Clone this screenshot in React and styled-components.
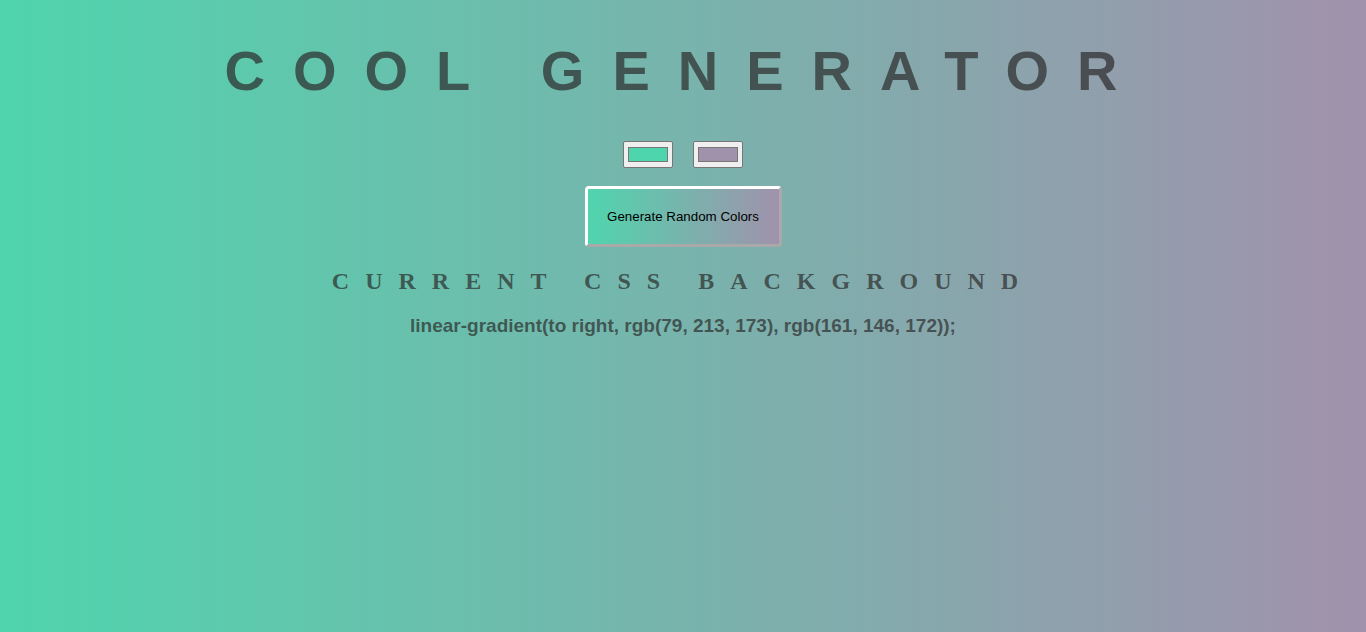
import React, { useState } from 'react';
import styled, { createGlobalStyle } from 'styled-components';

const GlobalStyle = createGlobalStyle`
    html, body {
        margin: 0;
        padding: 0;
        height: 100%;
    }
    body {
        font-family: "Liberation Sans", Arial, sans-serif;
        background: ${({ bg }) => bg};
        min-height: 632px;
    }
`;

const Page = styled.div`
    display: flex;
    flex-direction: column;
    align-items: center;
    text-align: center;
`;

const Title = styled.h1`
    margin: 38px 0 0;
    padding-left: 4px;
    font-family: "Liberation Sans", Arial, sans-serif;
    font-size: 56px;
    line-height: 66px;
    font-weight: bold;
    letter-spacing: 28px;
    color: rgba(43, 43, 43, 0.7);
`;

const Pickers = styled.div`
    display: flex;
    gap: 20px;
    margin-top: 37px;
`;

const Picker = styled.input`
    width: 50px;
    height: 27px;
    margin: 0;
    padding: 1px 2px;
    box-sizing: border-box;
    border: 1px solid #767676;
    border-radius: 2px;
    background: #efefef;
    cursor: pointer;
`;

const GenerateButton = styled.button`
    margin-top: 18px;
    width: 197px;
    height: 61px;
    box-sizing: border-box;
    border-style: solid;
    border-width: 3px;
    border-color: #fff #a9a9a9 #a9a9a9 #fff;
    border-radius: 4px;
    background: ${({ bg }) => bg};
    font-family: "Liberation Sans", Arial, sans-serif;
    font-size: 13.33px;
    color: #000;
    cursor: pointer;
`;

const Subtitle = styled.h3`
    margin: 20px 0 0;
    font-family: "Liberation Serif", "Times New Roman", serif;
    font-size: 24px;
    line-height: 28px;
    font-weight: bold;
    letter-spacing: 16px;
    color: rgba(43, 43, 43, 0.7);
`;

const Code = styled.h3`
    margin: 20px 0 0;
    font-size: 19px;
    line-height: 22px;
    font-weight: bold;
    color: rgba(43, 43, 43, 0.7);
`;

const toRgb = (hex) => {
    const n = parseInt(hex.slice(1), 16);
    return `rgb(${(n >> 16) & 255}, ${(n >> 8) & 255}, ${n & 255})`;
};

const randomHex = () =>
    '#' + Math.floor(Math.random() * 0xffffff).toString(16).padStart(6, '0');

export default function App() {
    const [left, setLeft] = useState('#4fd5ad');
    const [right, setRight] = useState('#a192ac');
    const bg = `linear-gradient(to right, ${toRgb(left)}, ${toRgb(right)})`;

    return (
        <>
            <GlobalStyle bg={bg} />
            <Page>
                <Title>COOL GENERATOR</Title>
                <Pickers>
                    <Picker type="color" value={left} onChange={(e) => setLeft(e.target.value)} />
                    <Picker type="color" value={right} onChange={(e) => setRight(e.target.value)} />
                </Pickers>
                <GenerateButton
                    bg={bg}
                    onClick={() => {
                        setLeft(randomHex());
                        setRight(randomHex());
                    }}
                >
                    Generate Random Colors
                </GenerateButton>
                <Subtitle>CURRENT CSS BACKGROUND</Subtitle>
                <Code>{bg};</Code>
            </Page>
        </>
    );
}
